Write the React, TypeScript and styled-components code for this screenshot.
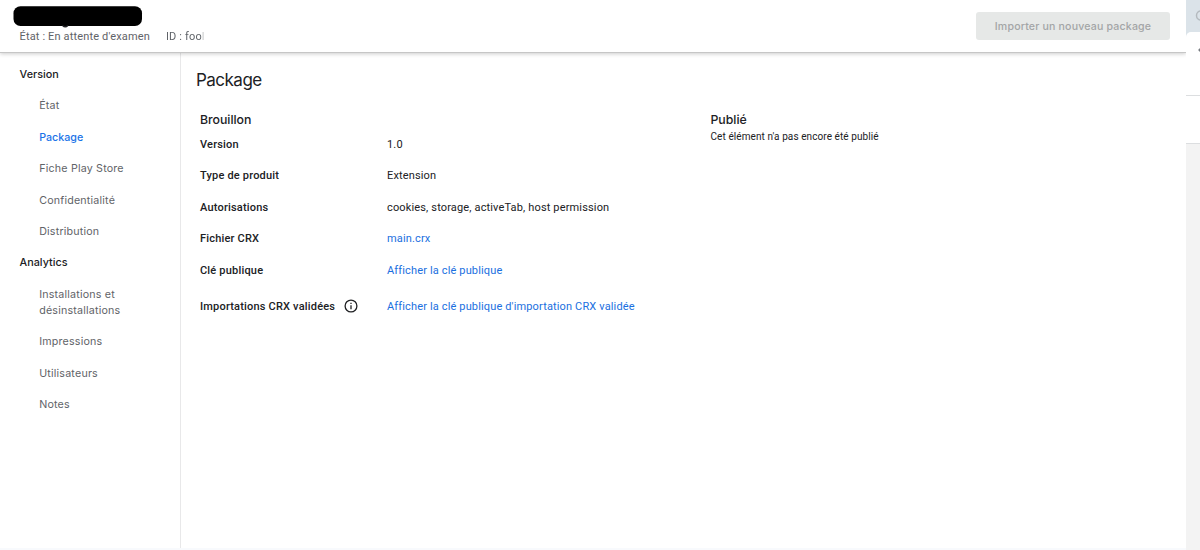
import React from 'react';
import styled, { createGlobalStyle } from 'styled-components';

const GlobalStyle = createGlobalStyle`
  * { box-sizing: border-box; }
  body {
    margin: 0;
    background: #fff;
    color: #202124;
    font-family: Roboto, "Liberation Sans", sans-serif;
    font-size: 11px;
  }
`;

const display = 'Inter, Roboto, sans-serif';

const Screen = styled.div`
  display: flex;
  width: 1200px;
  height: 550px;
  overflow: hidden;
`;

const Console = styled.div`
  display: flex;
  flex-direction: column;
  width: 1186px;
  height: 550px;
  border-bottom: 2px solid #f8fafd;
`;

const Header = styled.header`
  position: relative;
  display: flex;
  justify-content: space-between;
  flex: none;
  height: 53px;
  padding: 6px 16px 0 13px;
  border-bottom: 1px solid #c6c6c6;
  box-shadow: 0 1px 4px rgba(0, 0, 0, 0.2);
  clip-path: inset(0 0 -8px 0);
`;

const Redaction = styled.svg`
  display: block;
  width: 130px;
  height: 22px;
`;

const Meta = styled.div`
  display: flex;
  gap: 16px;
  margin: 2px 0 0 6.5px;
  color: #5f6368;
  font-size: 11px;
  line-height: 14px;
  letter-spacing: 0.15px;
  white-space: nowrap;
`;

const ItemId = styled.span`
  width: 38px;
  overflow: hidden;
  mask-image: linear-gradient(to right, #000 35px, rgba(0, 0, 0, 0.35) 36px);
`;

const ImportButton = styled.button`
  width: 194px;
  height: 28px;
  margin-top: 6px;
  padding: 1px 0 0;
  border: 0;
  border-radius: 3px;
  background: #e6e8e7;
  color: #a3a5a6;
  font: 500 10.6px/27px ${display};
  letter-spacing: 0.17px;
`;

const Body = styled.div`
  display: flex;
  flex: 1;
`;

const Sidebar = styled.nav`
  width: 181px;
  padding: 6px 0 0 19.6px;
  border-right: 1px solid #e8e8e9;
`;

const NavHeading = styled.div`
  height: 31.4px;
  font: 500 10.8px/31px ${display};
`;

const NavItem = styled.a<{ $active?: boolean }>`
  display: block;
  padding: 8px 40px 7.4px 19.6px;
  color: ${(p) => (p.$active ? '#1a73e8' : '#5f6368')};
  font: ${(p) => (p.$active ? 500 : 400)} 10.7px/16px ${display};
  letter-spacing: ${(p) => (p.$active ? '0px' : '0.19px')};
`;

const Main = styled.main`
  flex: 1;
  padding: 15px 0 0 15px;
`;

const Title = styled.h1`
  margin: 0;
  font: 400 17px/24px ${display};
  letter-spacing: -0.52px;
`;

const Columns = styled.div`
  display: flex;
  padding: 19px 0 0 4px;
`;

const Draft = styled.section`
  width: 510.5px;
`;

const SectionTitle = styled.h2`
  margin: 0;
  font: 500 12.3px/18px ${display};
  letter-spacing: -0.02px;
`;

const Row = styled.div<{ $tall?: boolean }>`
  display: flex;
  align-items: center;
  height: ${(p) => (p.$tall ? '41px' : '31.4px')};
  white-space: nowrap;
`;

const Label = styled.div`
  display: flex;
  align-items: center;
  gap: 9px;
  width: 187px;
  font-weight: 500;
  letter-spacing: 0.19px;
`;

const Value = styled.span`
  letter-spacing: 0.15px;
`;

const Link = styled.a`
  color: #1a6fe0;
  letter-spacing: 0.145px;
`;

const Rows = styled.div`
  margin-top: -0.2px;
`;

const Notice = styled.p`
  margin: 0;
  font-size: 10px;
  line-height: 15px;
  letter-spacing: 0.08px;
`;

const SidePanel = styled.aside`
  display: flex;
  flex-direction: column;
  width: 14px;
  background: #dbe3e9;
`;

const PanelTop = styled.div`
  height: 32px;
`;

const PanelToolbar = styled.div`
  height: 64px;
  border-bottom: 1px solid #dcdee0;
  border-top-left-radius: 5px;
  background: #fff;
`;

const PanelRow = styled.div`
  height: 48px;
  border-bottom: 1px solid #dcdee0;
  background: #fff;
`;

const PanelBody = styled.div`
  flex: 1;
  background: #f3f3f3;
`;

const PanelIcon = styled.svg`
  display: block;
  width: 14px;
  height: 32px;
`;

const nav = [
  {
    heading: 'Version',
    items: ['État', 'Package', 'Fiche Play Store', 'Confidentialité', 'Distribution'],
  },
  {
    heading: 'Analytics',
    items: ['Installations et désinstallations', 'Impressions', 'Utilisateurs', 'Notes'],
  },
];

const rows = [
  { label: 'Version', value: '1.0' },
  { label: 'Type de produit', value: 'Extension' },
  { label: 'Autorisations', value: 'cookies, storage, activeTab, host permission' },
  { label: 'Fichier CRX', value: 'main.crx', link: true },
  { label: 'Clé publique', value: 'Afficher la clé publique', link: true },
  {
    label: 'Importations CRX validées',
    value: "Afficher la clé publique d'importation CRX validée",
    link: true,
    info: true,
  },
];

const InfoIcon = () => (
  <svg width="14" height="14" viewBox="0 0 14 14" fill="none" stroke="#202124" strokeWidth="1.3">
    <circle cx="7" cy="7" r="5.9" />
    <path d="M7 6.3v3.9M7 3.8v1.3" />
  </svg>
);

export default function App() {
  return (
    <Screen>
      <GlobalStyle />
      <Console>
        <Header>
          <div>
            <Redaction viewBox="0 0 130 22">
              <rect x="0.5" y="0.3" width="128.5" height="19.7" rx="7" />
              <path d="M49.5 19.5q2.8 2.6 5.4 0" fill="none" stroke="#202124" strokeWidth="1.3" />
            </Redaction>
            <Meta>
              <span>État : En attente d'examen</span>
              <ItemId>ID : fool</ItemId>
            </Meta>
          </div>
          <ImportButton disabled>Importer un nouveau package</ImportButton>
        </Header>
        <Body>
          <Sidebar>
            {nav.map((group) => (
              <React.Fragment key={group.heading}>
                <NavHeading>{group.heading}</NavHeading>
                {group.items.map((item) => (
                  <NavItem key={item} $active={item === 'Package'}>
                    {item}
                  </NavItem>
                ))}
              </React.Fragment>
            ))}
          </Sidebar>
          <Main>
            <Title>Package</Title>
            <Columns>
              <Draft>
                <SectionTitle>Brouillon</SectionTitle>
                <Rows>
                  {rows.map((row) => (
                    <Row key={row.label} $tall={row.info}>
                      <Label>
                        {row.label}
                        {row.info && <InfoIcon />}
                      </Label>
                      {row.link ? <Link>{row.value}</Link> : <Value>{row.value}</Value>}
                    </Row>
                  ))}
                </Rows>
              </Draft>
              <section>
                <SectionTitle>Publié</SectionTitle>
                <Notice>Cet élément n'a pas encore été publié</Notice>
              </section>
            </Columns>
          </Main>
        </Body>
      </Console>
      <SidePanel>
        <PanelTop>
          <PanelIcon viewBox="0 0 14 32" fill="none" stroke="#b4babf" strokeWidth="1.5">
            <circle cx="15" cy="15.5" r="4.5" />
          </PanelIcon>
        </PanelTop>
        <PanelToolbar>
          <PanelIcon viewBox="0 0 14 32" fill="none" stroke="#777b80" strokeWidth="1.3">
            <path d="M16 15l-3 3 3 3" />
          </PanelIcon>
        </PanelToolbar>
        <PanelRow />
        <PanelBody />
      </SidePanel>
    </Screen>
  );
}
